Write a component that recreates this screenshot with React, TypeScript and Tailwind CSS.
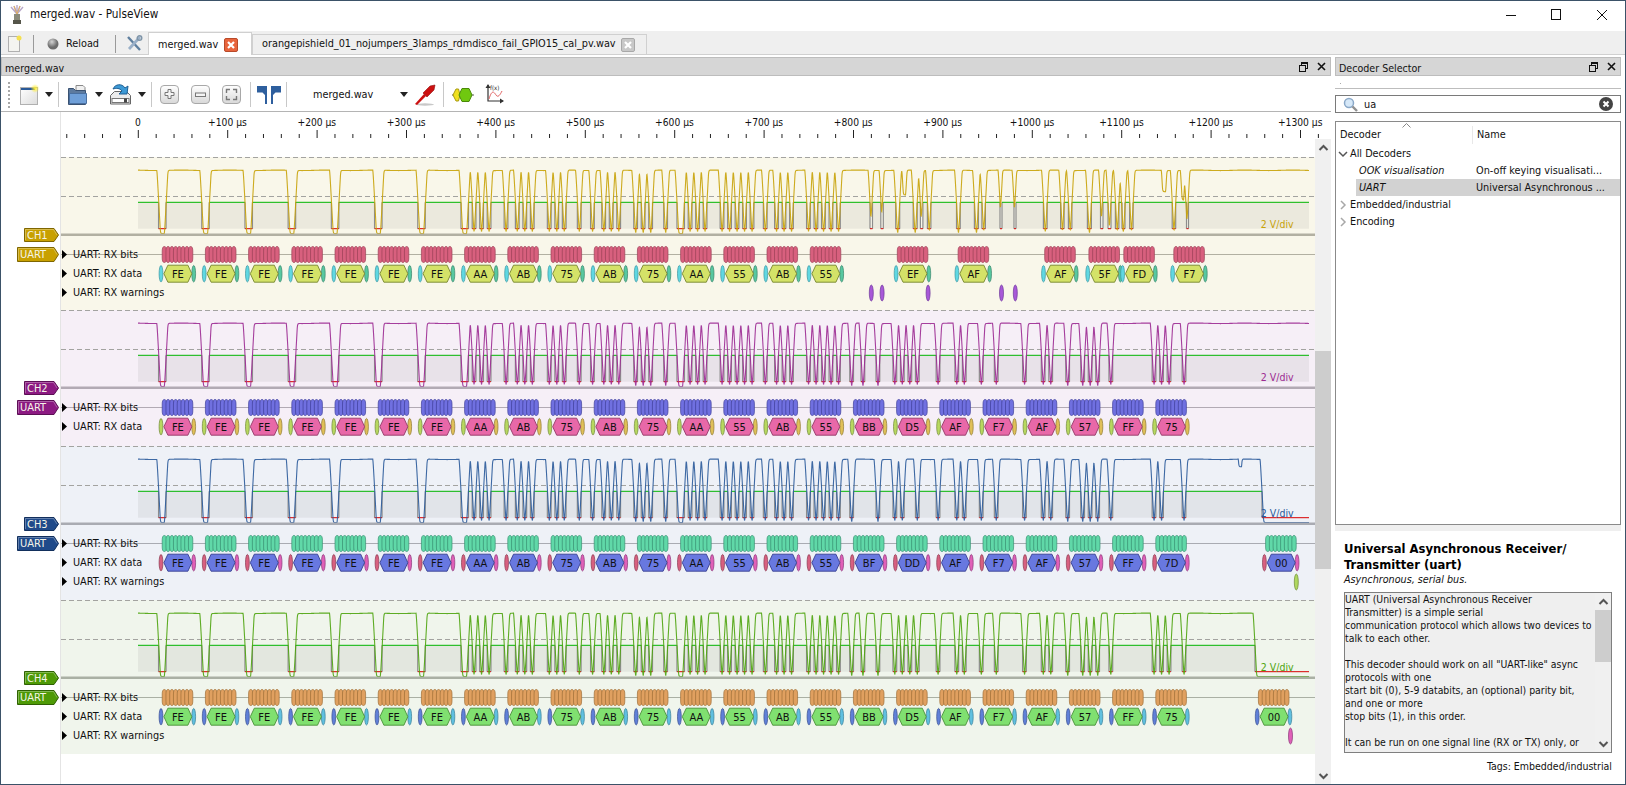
import React from "react";

const BIT = 3.75;
const PERIOD = 43.2;
const X0 = 162.3;
const OFF = 61;
const END = 1309;

type Range = [number, number];
type Dip = [number, number, number];

const common = ["FE", "FE", "FE", "FE", "FE", "FE", "FE", "AA", "AB", "75", "AB", "75", "AA", "55", "AB", "55"];

function seq(list: string[], from = 0) {
  return list.map((v, i) => ({ v, s: X0 + (i + from) * PERIOD }));
}

type Ch = {
  name: string;
  h: number;
  trace: string;
  bg: string;
  tag: string;
  tagB: string;
  line: string;
  bit: string;
  bitB: string;
  hex: string;
  hexB: string;
  a: string;
  aB: string;
  b: string;
  bB: string;
  warn?: string;
  warnB?: string;
  warnings: number[];
  frames: { v: string; s: number }[];
  lows: Range[];
  dips: Dip[];
  end: number;
};

const ch1Tail: Range[] = [
  [870, 2.5], [880.8, 2.5], [895.7, 4], [913.2, 4], [920.4, 2.5], [927.4, 3.5], [956.5, 3.75], [974.4, 4], [981.9, 3.5],
  [1000, 2], [1014, 2], [1043.4, 3.75], [1060.6, 3.5], [1068.4, 3.5], [1087.4, 4], [1100.5, 2.5], [1108, 3], [1115.4, 3.5],
  [1122, 3], [1129.6, 3.5], [1172.2, 3.5], [1186.5, 2],
].map(([x, w]) => [x, x + w] as Range);

function byteLows(v: string, s: number): Range[] {
  const n = parseInt(v, 16);
  const out: Range[] = [];
  let cur: number | null = s - BIT;
  for (let i = 0; i < 9; i++) {
    const x = s + i * BIT;
    const bit = i < 8 ? (n >> i) & 1 : 1;
    if (bit === 0 && cur === null) cur = x;
    if (bit === 1 && cur !== null) {
      out.push([cur, x]);
      cur = null;
    }
  }
  return out;
}

function lowsOf(frames: { v: string; s: number }[]) {
  return frames.flatMap((f) => byteLows(f.v, f.s));
}

const f1 = seq(common);
const t1 = [
  { v: "EF", s: 897.4 },
  { v: "AF", s: 958.2 },
  { v: "AF", s: 1044.8 },
  { v: "5F", s: 1089 },
  { v: "FD", s: 1123.9 },
  { v: "F7", s: 1173.9 },
];
const f2 = seq([...common, "BB", "D5", "AF", "F7", "AF", "57", "FF", "75"]);
const f3 = seq([...common, "BF", "DD", "AF", "F7", "AF", "57", "FF", "7D"]);

const channels: Ch[] = [
  {
    name: "CH1", h: 153, trace: "#c8a208", bg: "bg-[#f9f7ea]", tag: "#c8a000", tagB: "#7f6600", line: "#b2b0a2",
    bit: "#d8607e", bitB: "#9c4258", hex: "#d4e268", hexB: "#75852e", a: "#60d8e2", aB: "#3b95a0", b: "#58c8a0", bB: "#37846a",
    warn: "#a858d8", warnB: "#6f3a9a", warnings: [871.3, 882.1, 928.1, 1001.5, 1015.3],
    frames: [...f1, ...t1], lows: [...lowsOf(f1), ...ch1Tail],
    dips: [[902, 3.5, 0.39], [1161.5, 4, 0.34], [1180.5, 3, 0.47]], end: END,
  },
  {
    name: "CH2", h: 136, trace: "#9c2a92", bg: "bg-[#f6eff7]", tag: "#8c1a82", tagB: "#5c0f55", line: "#b2aab4",
    bit: "#7070e0", bitB: "#40409c", hex: "#e868a8", hexB: "#933866", a: "#b8d860", aB: "#708838", b: "#e0c058", bB: "#8f7830",
    warnings: [], frames: f2, lows: lowsOf(f2), dips: [], end: END,
  },
  {
    name: "CH3", h: 154, trace: "#2a5a9a", bg: "bg-[#eef1f7]", tag: "#204a8a", tagB: "#122f5c", line: "#a9abb2",
    bit: "#60d8a8", bitB: "#3a9072", hex: "#6878e0", hexB: "#363d90", a: "#d86080", aB: "#8a3a50", b: "#e060b8", bB: "#8a3878",
    warn: "#b0d860", warnB: "#6f8a38", warnings: [1296.3],
    frames: [...f3, { v: "00", s: 1265.7 }], lows: [...lowsOf(f3), [1262, END]], dips: [[1238.5, 3, 0.12]], end: END,
  },
  {
    name: "CH4", h: 154, trace: "#4ea40e", bg: "bg-[#f0f5ec]", tag: "#4e9a06", tagB: "#2f6103", line: "#aab0a4",
    bit: "#e0a060", bitB: "#a07038", hex: "#80e070", hexB: "#489038", a: "#6080d8", aB: "#384f90", b: "#60c0e0", bB: "#388098",
    warn: "#e060b8", warnB: "#8a3878", warnings: [1290.5],
    frames: [...f2, { v: "00", s: 1258.5 }], lows: [...lowsOf(f2), [1255, END]], dips: [], end: END,
  },
];

function analogPath(c: Ch) {
  const top = 13.7;
  const bottom = 76;
  let lvl = 0;
  let out = 0;
  const dt = 0.25;
  const slew = 0.286 * dt;
  const k = 1 - Math.exp(-dt / 0.35);
  const pts: string[] = [];
  const lows = [...c.lows].sort((a, b) => a[0] - b[0]);
  let li = 0;
  const shift = 1.75;
  for (let x = 138; x <= c.end; x += dt) {
    const sx = Math.min(x + shift, END - 0.01);
    while (li < lows.length && lows[li][1] < sx) li++;
    let target = li < lows.length && lows[li][0] <= sx && sx <= lows[li][1] ? 1 : 0;
    if (target === 0) {
      for (const d of c.dips) if (x >= d[0] && x <= d[0] + d[1]) target = d[2];
    }
    lvl += Math.max(-slew, Math.min(slew, target - lvl));
    out += (lvl - out) * k;
    const sag = target === 0 ? Math.sin(x * 0.13) * 0.004 + 0.004 : 0;
    const y = top + (out * 1.02 + sag - 0.01) * (bottom - top);
    pts.push(`${(x - OFF).toFixed(2)},${y.toFixed(2)}`);
  }
  return pts.join(" ");
}

function Tag({ text, w, h, fill, stroke }: { text: string; w: number; h: number; fill: string; stroke: string }) {
  return (
    <div className="relative flex items-center pl-[3px] text-[11px] text-[#f4f4e8]" style={{ width: w, height: h }}>
      <svg className="absolute inset-0" width={w} height={h}>
        <polygon points={`0.5,0.5 ${w - 5},0.5 ${w - 0.5},${h / 2} ${w - 5},${h - 0.5} 0.5,${h - 0.5}`} fill={fill} stroke={stroke} />
        <polyline points={`1.5,${h - 2} 1.5,1.5 ${w - 5.5},1.5 ${w - 2},${h / 2}`} fill="none" stroke="#ffffff" strokeOpacity="0.3" />
      </svg>
      <span className="relative leading-none">{text}</span>
    </div>
  );
}

function Row({ text }: { text: string }) {
  return (
    <div className="relative flex h-[19px] items-center text-[#101010]">
      <svg width="6" height="9" className="ml-[1px]">
        <polygon points="0,0 5,4.5 0,9" fill="#000" />
      </svg>
      <span className="ml-[5px] pt-[1px] leading-none">{text}</span>
    </div>
  );
}

function ChannelTrace({ c }: { c: Ch }) {
  const W = 1254;
  const lows = [...c.lows].sort((a, b) => a[0] - b[0]);
  const th = 45.3;
  const lo = 71.7;
  const highs: Range[] = [];
  let p = 138;
  lows.forEach((l) => {
    if (l[0] > p) highs.push([p, l[0]]);
    p = Math.max(p, l[1]);
  });
  if (p < c.end) highs.push([p, c.end]);
  return (
    <svg className="absolute inset-0" width={W} height={c.h}>
      <line x1="0" x2={W} y1="0.5" y2="0.5" stroke="#a3a3a0" strokeDasharray="5 3" />
      <line x1="0" x2={W} y1="39.5" y2="39.5" stroke="#a3a3a0" strokeDasharray="5 3" />
      {highs.map((r, i) => (
        <rect key={i} x={r[0] - OFF} y={th} width={r[1] - r[0]} height={lo - th} fill="#606060" fillOpacity="0.085" />
      ))}
      {lows.flatMap((r, i) => [
        <line key={`a${i}`} x1={r[0] - OFF} x2={r[0] - OFF} y1={th} y2={lo} stroke="#8c8c8c" strokeWidth="1.2" />,
        r[1] < END ? <line key={`b${i}`} x1={r[1] - OFF} x2={r[1] - OFF} y1={th} y2={lo} stroke="#8c8c8c" strokeWidth="1.2" /> : null,
      ])}
      {highs.map((r, i) => (
        <line key={i} x1={r[0] - OFF} x2={r[1] - OFF} y1={th} y2={th} stroke="#00b400" strokeWidth="1" />
      ))}
      {lows.map((r, i) => (
        <line key={i} x1={r[0] - OFF} x2={r[1] - OFF} y1={lo} y2={lo} stroke="#d80000" strokeWidth="1" />
      ))}
      <polyline points={analogPath(c)} fill="none" stroke={c.trace} strokeWidth="1.1" strokeOpacity="0.9" />
      <text x={1260.8 - OFF} y="71" fontSize="10.5" fill={c.trace}>2 V/div</text>
      <line x1="0" x2={W} y1="77.7" y2="77.7" stroke={c.line} strokeWidth="2.4" />
      <line x1="0" x2={W} y1="97.5" y2="97.5" stroke={c.line} strokeWidth="1" />
      {c.frames.map((f, i) => {
        const s = f.s - OFF;
        return (
          <g key={i}>
            {Array.from({ length: 8 }).map((_, b) => (
              <rect key={b} x={s + b * BIT - 0.1} y="89.5" width={BIT + 0.6} height="16" rx="2.1" ry="4.5" fill={c.bit} stroke={c.bitB} strokeWidth="0.7" />
            ))}
            <ellipse cx={s - 1.3} cy="116.7" rx="1.9" ry="8.3" fill={c.a} stroke={c.aB} strokeWidth="0.7" />
            <ellipse cx={s + 31.4} cy="116.7" rx="1.9" ry="8.3" fill={c.b} stroke={c.bB} strokeWidth="0.7" />
            <polygon
              points={`${s + 1.6},116.7 ${s + 5.6},108.2 ${s + 25.6},108.2 ${s + 29.5},116.7 ${s + 25.6},125.2 ${s + 5.6},125.2`}
              fill={c.hex}
              stroke={c.hexB}
              strokeWidth="0.9"
            />
            <text x={s + 15.6} y="120.7" fontSize="11" textAnchor="middle" fill="#101010">{f.v}</text>
          </g>
        );
      })}
      {c.warn &&
        c.warnings.map((x, i) => (
          <ellipse key={i} cx={x - OFF} cy="136" rx="2" ry="8" fill={c.warn} stroke={c.warnB} strokeWidth="0.7" />
        ))}
    </svg>
  );
}

function Channel({ c }: { c: Ch }) {
  return (
    <div className="flex" style={{ height: c.h }}>
      <div className="flex w-[60px] shrink-0 flex-col items-end gap-[5px] border-r border-[#e4e4e4] pt-[71px] pr-[1px]">
        <Tag text={c.name} w={35} h={14} fill={c.tag} stroke={c.tagB} />
        <Tag text="UART" w={42} h={15} fill={c.tag} stroke={c.tagB} />
      </div>
      <div className={`relative flex-1 pt-[88px] ${c.bg}`}>
        <ChannelTrace c={c} />
        <Row text="UART: RX bits" />
        <Row text="UART: RX data" />
        {c.warn && <Row text="UART: RX warnings" />}
      </div>
    </div>
  );
}

function Ruler() {
  const W = 1330;
  const ticks = [];
  for (let i = -4; i < 70; i++) {
    const x = 138.3 + i * 17.88 - 1;
    const major = ((i % 5) + 5) % 5 === 0;
    ticks.push(<line key={i} x1={x} x2={x} y1={major ? 18 : 22} y2="26" stroke="#222" />);
  }
  const labels = [];
  for (let i = 0; i <= 13; i++) {
    const x = 138 + i * 89.4 - 1;
    labels.push(
      <text key={i} x={x} y="14" fontSize="10.2" textAnchor="middle" fill="#111">{i === 0 ? "0" : `+${i * 100} µs`}</text>
    );
  }
  return (
    <svg width={W} height="27" className="block shrink-0">
      <line x1="59.5" x2="59.5" y1="0" y2="27" stroke="#e4e4e4" />
      {ticks}
      {labels}
    </svg>
  );
}

function Chevron({ up, className = "" }: { up?: boolean; className?: string }) {
  return (
    <svg width="11" height="8" viewBox="0 0 11 8" className={className}>
      <polyline points={up ? "1.5,6 5.5,2 9.5,6" : "1.5,2 5.5,6 9.5,2"} fill="none" stroke="#555" strokeWidth="2" />
    </svg>
  );
}

function DockHeader({ title }: { title: string }) {
  return (
    <div className="flex h-[19px] shrink-0 items-center border border-[#bdbdbd] bg-[#d6d6d6] pr-[4px] pl-[3px] text-[10.6px] text-[#111]">
      <span className="flex-1 pt-[4px] leading-none">{title}</span>
      <svg width="9" height="10" className="mr-[9px]">
        <rect x="2.5" y="0.5" width="6" height="6" fill="none" stroke="#111" />
        <rect x="0.5" y="3.5" width="6" height="6" fill="#d6d6d6" stroke="#111" />
        <line x1="2.5" x2="8.5" y1="1.5" y2="1.5" stroke="#111" />
      </svg>
      <svg width="9" height="9">
        <path d="M1 1 L8 8 M8 1 L1 8" stroke="#111" strokeWidth="1.6" />
      </svg>
    </div>
  );
}

function DropArrow({ className = "" }: { className?: string }) {
  return (
    <svg width="8" height="5" className={className}>
      <polygon points="0,0 8,0 4,5" fill="#222" />
    </svg>
  );
}

function Sep({ className = "" }: { className?: string }) {
  return <div className={`h-[25px] w-px shrink-0 bg-[#c8c8c8] ${className}`} />;
}

function ZoomBtn({ kind, className = "" }: { kind: "in" | "out" | "fit"; className?: string }) {
  return (
    <svg width="19" height="19" className={className}>
      <defs>
        <linearGradient id={`z${kind}`} x1="0" y1="0" x2="0" y2="1">
          <stop offset="0" stopColor="#ffffff" />
          <stop offset="1" stopColor="#d8d8d8" />
        </linearGradient>
      </defs>
      <rect x="0.5" y="0.5" width="18" height="18" rx="3.5" fill={`url(#z${kind})`} stroke="#a8a8a8" />
      {kind === "in" && <path d="M8 4.5h3v3h3v3h-3v3H8v-3H5v-3h3z" fill="#f4f4f4" stroke="#777" />}
      {kind === "out" && <rect x="4.5" y="8" width="10" height="3.5" fill="#f4f4f4" stroke="#777" />}
      {kind === "fit" && (
        <path d="M4.5 8V4.5H8M11 4.5h3.5V8M14.5 11v3.5H11M8 14.5H4.5V11" fill="none" stroke="#777" strokeWidth="1.4" />
      )}
    </svg>
  );
}

function Toolbar() {
  return (
    <div className="flex h-[36px] shrink-0 items-center border-b border-[#b4b4b4] bg-white pt-[2px] pl-[7px]">
      <div className="mr-[9px] h-[26px] w-[2px] border-l-2 border-dotted border-[#a8a8a8]" />
      <svg width="22" height="22" className="mr-[4px]">
        <defs>
          <radialGradient id="glow"><stop offset="0" stopColor="#ffee30" /><stop offset="1" stopColor="#ffee30" stopOpacity="0" /></radialGradient>
          <linearGradient id="pg" x1="0" y1="0" x2="1" y2="1"><stop offset="0" stopColor="#fff" /><stop offset="1" stopColor="#dcdcdc" /></linearGradient>
        </defs>
        <rect x="1.5" y="3.5" width="17" height="17" fill="url(#pg)" stroke="#b0b0b0" />
        <rect x="2" y="4" width="14" height="2" fill="#2a5a98" />
        <circle cx="16" cy="4.5" r="4.5" fill="url(#glow)" />
      </svg>
      <DropArrow className="mr-[5px]" />
      <Sep className="mr-[8px]" />
      <svg width="22" height="22" className="mr-[6px]">
        <path d="M9 1.5h7l2 2v9H9z" fill="#f0f0f0" stroke="#8a8a8a" />
        <path d="M1.5 4.5h5l2 2h10v14h-17z" fill="#5d7a9e" stroke="#3a5272" />
        <path d="M2.5 9.5h17v10h-17z" fill="#6f9fd8" stroke="#4a70a0" />
      </svg>
      <DropArrow className="mr-[6px]" />
      <svg width="23" height="23" className="mr-[6px]">
        <path d="M1.5 12.5l4-4h12l4 4v8.5h-20z" fill="#ececec" stroke="#666" />
        <rect x="3" y="15.5" width="17" height="4" fill="#fff" stroke="#777" />
        <rect x="15" y="15.5" width="3" height="4" fill="#444" />
        <path d="M4 6 C6 1 13 0 16 5 L19 3 L18 11 L10 11 L13 8 C11 5 7 5 4 6z" fill="#3d9ad6" stroke="#1e5f94" />
      </svg>
      <DropArrow className="mr-[5px]" />
      <Sep className="mr-[8px]" />
      <ZoomBtn kind="in" className="mr-[12px]" />
      <ZoomBtn kind="out" className="mr-[12px]" />
      <ZoomBtn kind="fit" className="mr-[9px]" />
      <Sep className="mr-[6px]" />
      <svg width="24" height="18" className="mr-[5px]">
        <path d="M0 0h10v18H8V9L5.5 6.5H0z" fill="#2e5f9e" />
        <path d="M24 0H14v18h2V9l2.5-2.5H24z" fill="#2e5f9e" />
      </svg>
      <Sep className="mr-[26px]" />
      <span className="w-[87px] pt-[2px] leading-none text-[#111]">merged.wav</span>
      <DropArrow className="mr-[6px]" />
      <svg width="23" height="24" className="mr-[6px]">
        <ellipse cx="11" cy="21.5" rx="9" ry="1.2" fill="#c8c8c8" />
        <path d="M1 21 L10 11 L12 13 L3 22z" fill="#cc1010" />
        <path d="M9 10 L16 3 L21 2 L20 7 L13 14z" fill="#cc1010" stroke="#901010" strokeWidth="0.6" />
      </svg>
      <Sep className="mr-[8px]" />
      <svg width="22" height="16" className="mr-[11px]">
        <line x1="0" x2="22" y1="8" y2="8" stroke="#555" />
        <polygon points="1,8 4,2 6.5,2 8,8 6.5,14 4,14" fill="#f0e020" stroke="#a89a10" />
        <polygon points="7,8 10,1.5 17,1.5 20,8 17,14.5 10,14.5" fill="#70c810" stroke="#4a8a08" />
      </svg>
      <svg width="19" height="21">
        <path d="M3 1v16h15" fill="none" stroke="#333" strokeWidth="1.2" />
        <polygon points="3,0 0.5,4 5.5,4" fill="#333" />
        <polygon points="19,17 15,14.5 15,19.5" fill="#333" />
        <path d="M4 15 C7 5 9 8 11 11 C13 14 15 11 17 7" fill="none" stroke="#e06060" strokeWidth="1" />
        <text x="5" y="6" fontSize="6" fill="#222">f(x)</text>
      </svg>
    </div>
  );
}

function Scrollbar() {
  return (
    <div className="flex w-[16px] shrink-0 flex-col items-center bg-[#f0f0f0]">
      <div className="flex h-[17px] shrink-0 items-center"><Chevron up /></div>
      <div className="h-[195px] shrink-0" />
      <div className="h-[218px] w-full shrink-0 bg-[#cdcdcd]" />
      <div className="flex-1" />
      <div className="flex h-[17px] shrink-0 items-center"><Chevron /></div>
    </div>
  );
}

const Arrow = ({ open }: { open?: boolean }) => (
  <svg width="10" height="10" className="mx-[1px]">
    {open ? (
      <polyline points="1,3 5,7 9,3" fill="none" stroke="#555" strokeWidth="1.5" />
    ) : (
      <polyline points="3,1 7,5 3,9" fill="none" stroke="#a8a8a8" strokeWidth="1.5" />
    )}
  </svg>
);

const desc = [
  "UART (Universal Asynchronous Receiver",
  "Transmitter) is a simple serial",
  "communication protocol which allows two devices to",
  "talk to each other.",
  "",
  'This decoder should work on all "UART-like" async',
  "protocols with one",
  "start bit (0), 5-9 databits, an (optional) parity bit,",
  "and one or more",
  "stop bits (1), in this order.",
  "",
  "It can be run on one signal line (RX or TX) only, or",
];

function DecoderPanel() {
  return (
    <div className="flex w-[286px] shrink-0 flex-col">
      <DockHeader title="Decoder Selector" />
      <div className="relative h-[13px] shrink-0 border-b border-[#bdbdbd]">
        <div className="mt-[7px] ml-[5px] h-[1px] w-[1px] bg-[#aaaaaa]" />
      </div>
      <div className="mt-[6px] flex h-[18px] shrink-0 items-center border border-[#7a7a7a] bg-white pr-[7px] pl-[7px]">
        <svg width="15" height="15" className="mr-[6px]">
          <circle cx="6" cy="6" r="4.5" fill="#d6e8f8" stroke="#8aa8c8" strokeWidth="1.5" />
          <line x1="9.5" y1="9.5" x2="14" y2="14" stroke="#909090" strokeWidth="2.4" />
        </svg>
        <span className="flex-1 pt-[3px] leading-none">ua</span>
        <svg width="14" height="14">
          <circle cx="7" cy="7" r="7" fill="#444" />
          <path d="M4.5 4.5l5 5M9.5 4.5l-5 5" stroke="#fff" strokeWidth="2" />
        </svg>
      </div>
      <div className="mt-[8px] h-[404px] shrink-0 overflow-hidden border border-[#8a8a8a] bg-white pt-[1px] text-[#111]">
        <div className="relative flex h-[22px] items-end pb-[1px]">
          <span className="w-[137px] border-r border-[#e8e8e8] pl-[4px] leading-[18px]">Decoder</span>
          <span className="pl-[4px] leading-[18px]">Name</span>
          <svg width="9" height="5" className="absolute top-0 left-[66px]">
            <polyline points="0.5,4.5 4.5,0.5 8.5,4.5" fill="none" stroke="#888" />
          </svg>
        </div>
        <div className="flex h-[17px] items-center pl-[1px]"><Arrow open /><span className="ml-[1px] pt-[2px]">All Decoders</span></div>
        <div className="flex h-[17px] items-center">
          <span className="ml-[23px] w-[117px] pt-[2px] italic">OOK visualisation</span><span className="pt-[2px]">On-off keying visualisati...</span>
        </div>
        <div className="ml-[20px] flex h-[17px] items-center bg-[#d2d2d2]">
          <span className="ml-[3px] w-[117px] pt-[2px] italic">UART</span><span className="pt-[2px]">Universal Asynchronous ...</span>
        </div>
        <div className="flex h-[17px] items-center pl-[1px]"><Arrow /><span className="ml-[1px] pt-[2px]">Embedded/industrial</span></div>
        <div className="flex h-[17px] items-center pl-[1px]"><Arrow /><span className="ml-[1px] pt-[2px]">Encoding</span></div>
      </div>
      <div className="h-[6px] shrink-0 bg-[#efefef]" />
      <div className="flex flex-1 flex-col px-[9px] pt-[10px] text-[#111]">
        <div className="text-[12.9px] leading-[16px] font-bold text-black">
          Universal Asynchronous Receiver/<br />Transmitter (uart)
        </div>
        <div className="text-[10.7px] leading-[13px] italic">Asynchronous, serial bus.</div>
        <div className="mt-[6px] flex h-[161px] shrink-0 overflow-hidden border border-[#7f7f7f] bg-[#efefef]">
          <div className="flex-1 overflow-hidden text-[10.4px] leading-[13px]">
            {desc.map((d, i) => (
              <div key={i} className="h-[13px] whitespace-nowrap">{d}</div>
            ))}
          </div>
          <div className="flex w-[16px] shrink-0 flex-col items-center bg-[#f0f0f0]">
            <div className="flex h-[17px] shrink-0 items-center"><Chevron up /></div>
            <div className="h-[52px] w-full shrink-0 bg-[#cdcdcd]" />
            <div className="flex-1" />
            <div className="flex h-[17px] shrink-0 items-center"><Chevron /></div>
          </div>
        </div>
        <div className="mt-[6px] text-right text-[10.5px] leading-[14px]">Tags: Embedded/industrial</div>
      </div>
    </div>
  );
}

function CloseTab({ active }: { active?: boolean }) {
  return (
    <svg width="14" height="14" className="shrink-0">
      <rect x="0.5" y="0.5" width="13" height="13" rx="1.5" fill={active ? "#e8643c" : "#c8c8c8"} stroke={active ? "#b84a2a" : "#a8a8a8"} />
      <path d="M4 4l6 6M10 4l-6 6" stroke="#fff" strokeWidth="2.2" />
    </svg>
  );
}

export default function App() {
  return (
    <div className="flex h-[785px] w-[1626px] flex-col overflow-hidden border border-[#3b5268] bg-white font-['DejaVu_Sans_Condensed','Liberation_Sans',sans-serif] text-[10.8px] text-[#111]">
      {/* title bar */}
      <div className="flex h-[30px] shrink-0 items-center bg-white pb-[2px]">
        <svg width="16" height="20" className="mr-[5px] ml-[8px]">
          <path d="M8 9L2 2M8 9L5 1M8 9L8 0M8 9L11 1M8 9L14 2" stroke="#b8a8c8" strokeWidth="1.4" />
          <path d="M8 9L5 1M8 9L11 1" stroke="#e0b060" strokeWidth="1" />
          <rect x="5" y="9" width="6" height="8" fill="#8a8a7a" />
          <rect x="4" y="15" width="8" height="4" fill="#55554a" />
        </svg>
        <span className="flex-1 text-[11.7px] leading-none">merged.wav - PulseView</span>
        <svg width="102" height="12" className="mr-[17px]">
          <line x1="0" x2="10" y1="6.5" y2="6.5" stroke="#111" />
          <rect x="45.5" y="0.5" width="9" height="10" fill="none" stroke="#111" />
          <path d="M91 1l10 10M101 1l-10 10" stroke="#111" />
        </svg>
      </div>
      {/* tab bar */}
      <div className="flex h-[24px] shrink-0 items-end border-b border-[#d0d0d0] bg-[#efefef]">
        <div className="flex h-[24px] w-[146px] shrink-0 items-center pt-[3px] pl-[7px]">
          <svg width="14" height="17">
            <rect x="0.5" y="1.5" width="11" height="15" fill="#f4f4f0" stroke="#b0b0b0" />
            <circle cx="11" cy="3" r="2.5" fill="#f4e050" />
          </svg>
          <div className="mr-[13px] ml-[11px] h-[18px] w-px bg-[#9a9a9a]" />
          <svg width="12" height="12" className="mr-[7px]">
            <defs><radialGradient id="sph" cx="0.4" cy="0.3"><stop offset="0" stopColor="#d4d4d4" /><stop offset="1" stopColor="#6c6c6c" /></radialGradient></defs>
            <circle cx="6" cy="6" r="5.5" fill="url(#sph)" />
          </svg>
          <span className="w-[33px] pt-[2px] leading-none">Reload</span>
          <div className="mr-[10px] ml-[16px] h-[18px] w-px bg-[#9a9a9a]" />
          <svg width="17" height="17" className="shrink-0">
            <path d="M2 2l12 13" stroke="#5f7f9f" strokeWidth="2.4" />
            <path d="M14 2L3 14" stroke="#9ab0c8" strokeWidth="2.8" />
            <circle cx="13.5" cy="3" r="2.3" fill="none" stroke="#7f95a8" strokeWidth="1.4" />
          </svg>
        </div>
        <div className="mb-[-1px] ml-[1px] flex h-[23px] w-[104px] shrink-0 items-center justify-between border border-b-0 border-[#d0d0d0] bg-white pt-[2px] pr-[13px] pl-[9px]">
          <span className="leading-none">merged.wav</span>
          <CloseTab active />
        </div>
        <div className="flex h-[20px] w-[395px] shrink-0 items-center justify-between border border-b-0 border-[#d0d0d0] pr-[11px] pl-[9px]">
          <span className="leading-none whitespace-nowrap">orangepishield_01_nojumpers_3lamps_rdmdisco_fail_GPIO15_cal_pv.wav</span>
          <CloseTab />
        </div>
      </div>
      {/* main */}
      <div className="flex min-h-0 flex-1 gap-[4px] pt-[2px]">
        <div className="flex w-[1330px] shrink-0 flex-col">
          <DockHeader title="merged.wav" />
          <Toolbar />
          <Ruler />
          <div className="flex min-h-0 flex-1">
            <div className="flex-1 overflow-hidden">
              <div className="flex h-[18px]"><div className="w-[60px] border-r border-[#e4e4e4]" /></div>
              {channels.map((c) => (
                <Channel key={c.name} c={c} />
              ))}
              <div className="flex h-[40px]"><div className="w-[60px] border-r border-[#e4e4e4]" /></div>
            </div>
            <Scrollbar />
          </div>
        </div>
        <DecoderPanel />
      </div>
    </div>
  );
}
